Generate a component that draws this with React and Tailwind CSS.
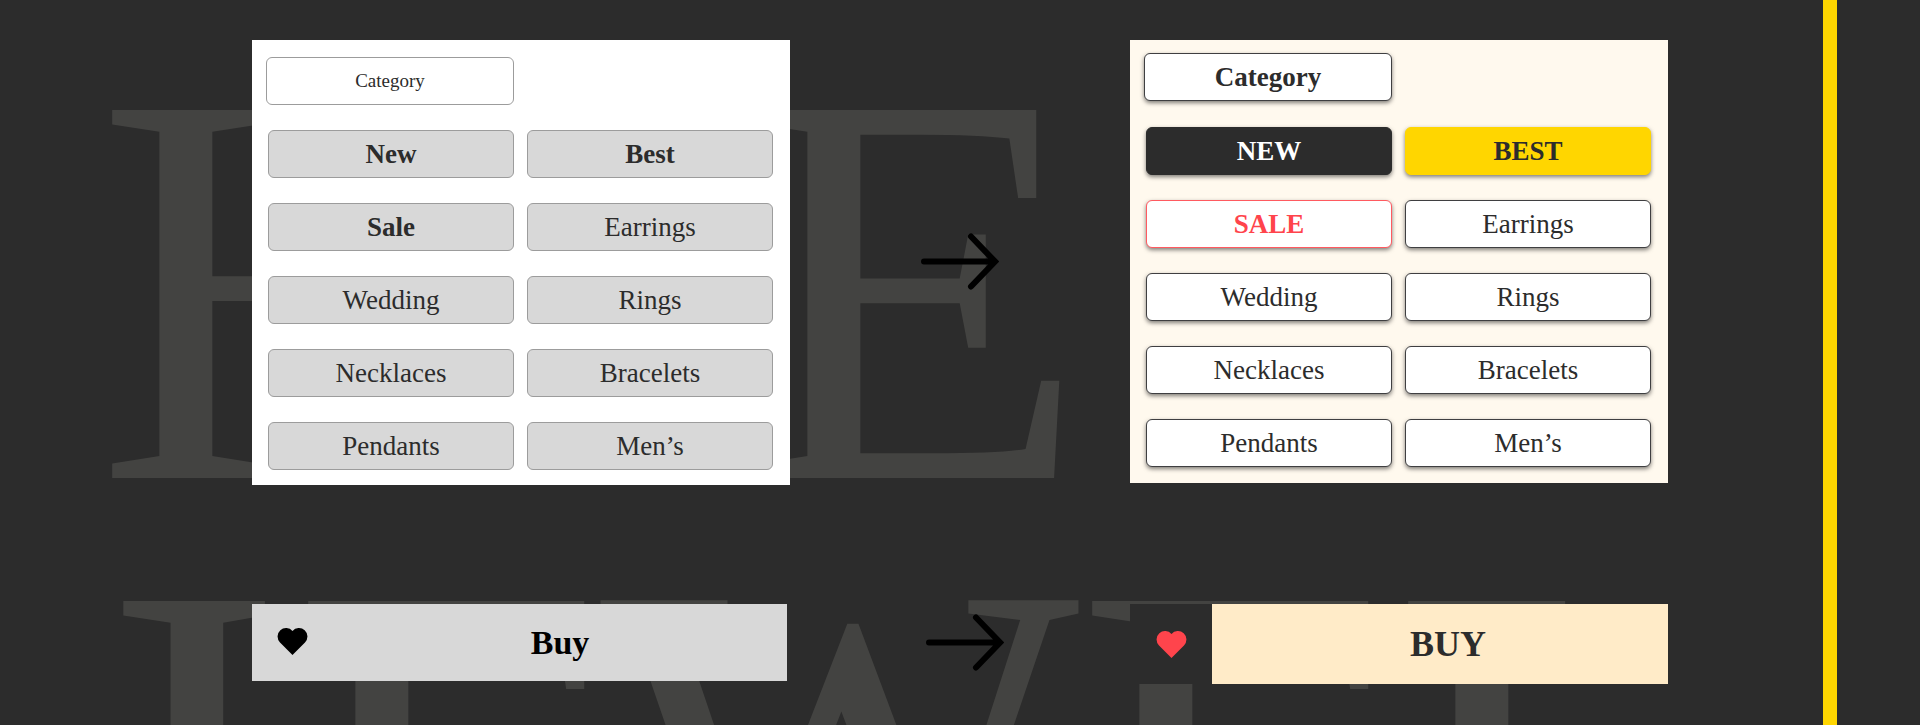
const LEFT_ITEMS = [
  { label: 'New', strong: true },
  { label: 'Best', strong: true },
  { label: 'Sale', strong: true },
  { label: 'Earrings' },
  { label: 'Wedding' },
  { label: 'Rings' },
  { label: 'Necklaces' },
  { label: 'Bracelets' },
  { label: 'Pendants' },
  { label: 'Men’s' },
];

const OUTLINE = 'border-[#3f3f41] bg-white text-[#2c2c2c]';

const RIGHT_ITEMS = [
  { label: 'NEW', tone: 'border-[#2c2c2c] bg-[#2c2c2c] text-white font-bold' },
  { label: 'BEST', tone: 'border-[#ffd600] bg-[#ffd600] text-[#2c2c2c] font-bold' },
  { label: 'SALE', tone: 'border-[#ff5a60] bg-white text-[#ff444c] font-bold' },
  { label: 'Earrings', tone: OUTLINE },
  { label: 'Wedding', tone: OUTLINE },
  { label: 'Rings', tone: OUTLINE },
  { label: 'Necklaces', tone: OUTLINE },
  { label: 'Bracelets', tone: OUTLINE },
  { label: 'Pendants', tone: OUTLINE },
  { label: 'Men’s', tone: OUTLINE },
];

function Arrow() {
  return (
    <svg className="w-[78px] h-[57px]" viewBox="0 0 78 57" fill="none" stroke="#000" strokeWidth="6" strokeLinecap="round" aria-hidden="true">
      <path d="M3 28.5H73M50 3.5L74 28.5L50 53.5" />
    </svg>
  );
}

function Heart() {
  return (
    <svg className="w-[31px] h-[27px]" viewBox="0 0 92 83" fill="currentColor" aria-hidden="true">
      <path d="M46 9.4A26 26 0 1 0 7.6 44.4L46 82.8L84.4 44.4A26 26 0 1 0 46 9.4Z" />
    </svg>
  );
}

function Backdrop() {
  return (
    <div aria-hidden="true" className="absolute inset-0 overflow-hidden text-[562px] leading-none text-[#fffff0]/11 select-none">
      <span className="absolute left-[96px] top-[8px]">H</span>
      <span className="absolute left-[744px] top-[8px]">E</span>
      <span className="absolute left-[58px] top-[499px]">J</span>
      <span className="absolute left-[292px] top-[499px]">E</span>
      <span className="absolute left-[600px] top-[508px] text-[508px]">W</span>
      <span className="absolute left-[1076px] top-[499px]">E</span>
      <span className="absolute left-[1392px] top-[499px]">L</span>
    </div>
  );
}

export default function App() {
  return (
    <main className="relative flex min-h-screen overflow-hidden bg-[#2c2c2c] font-['Liberation_Serif',serif]">
      <Backdrop />
      <div className="relative grow pt-10 pl-[252px] pr-[155px] pb-10">
        <div className="grid grid-cols-[538fr_340fr_538fr]">
          <section className="self-start bg-white pt-[17px] pb-[15px] pl-[14px] pr-[17px] text-[#2c2c2c]">
            <button className="h-12 w-[248px] rounded-md border border-[#9c9c9c] bg-white text-[19px]">Category</button>
            <div className="mt-[25px] grid grid-cols-2 gap-x-[13px] gap-y-[25px] pl-[2px]">
              {LEFT_ITEMS.map(({ label, strong }) => (
                <button
                  key={label}
                  className={
                    strong
                      ? 'h-12 rounded-md border border-[#9c9c9c] bg-[#d8d8d8] text-[27px] font-bold'
                      : 'h-12 rounded-md border border-[#9c9c9c] bg-[#d8d8d8] text-[27px]'
                  }
                >
                  {label}
                </button>
              ))}
            </div>
          </section>
          <div className="flex items-start justify-center pt-[193px]">
            <Arrow />
          </div>
          <section className="self-start bg-[#fff9ee] pt-[13px] pb-4 pl-[14px] pr-[17px]">
            <button className="h-12 w-[248px] rounded-md border border-[#3f3f41] bg-white text-[27px] font-bold text-[#2c2c2c] shadow-[0_2px_4px_rgba(0,0,0,0.5)]">
              Category
            </button>
            <div className="mt-[26px] grid grid-cols-2 gap-x-[13px] gap-y-[25px] pl-[2px]">
              {RIGHT_ITEMS.map(({ label, tone }) => (
                <button key={label} className={`h-12 rounded-md border text-[27px] shadow-[0_2px_4px_rgba(0,0,0,0.5)] ${tone}`}>
                  {label}
                </button>
              ))}
            </div>
          </section>
        </div>

        <div className="mt-[119px] grid grid-cols-[538fr_340fr_538fr] items-start">
          <div className="mr-[3px] flex h-[77px] bg-[#d8d8d8] text-black">
            <button aria-label="Add to favourites" className="flex w-[81px] items-center justify-center pb-[2px]">
              <Heart />
            </button>
            <button className="grow text-[34px] font-bold">Buy</button>
          </div>
          <div className="flex justify-center pt-[10px] pl-[10px]">
            <Arrow />
          </div>
          <div className="flex h-20">
            <button aria-label="Remove from favourites" className="flex w-[82px] items-center justify-center bg-[#2c2c2c] text-[#ff444c]">
              <Heart />
            </button>
            <button className="grow bg-[#ffebc8] pl-4 text-[36px] font-bold text-[#2c2c2c]">BUY</button>
          </div>
        </div>
      </div>
      <div className="relative w-[14px] shrink-0 bg-[#ffd600]" />
      <div className="w-[83px] shrink-0" />
    </main>
  );
}
